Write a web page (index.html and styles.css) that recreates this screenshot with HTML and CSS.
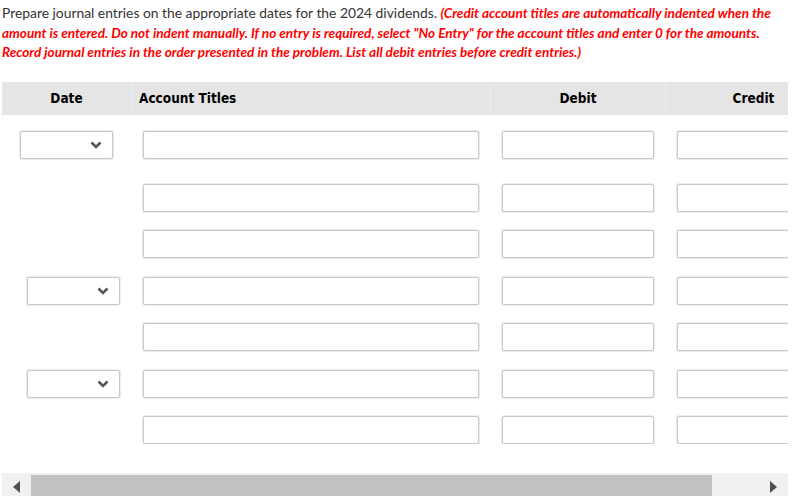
FILE: index.html
```html
<!DOCTYPE html>
<html>
<head>
<meta charset="utf-8">
<link rel="stylesheet" href="styles.css">
</head>
<body>
<div class="page">
  <p class="intro">Prepare journal entries on the appropriate dates for the 2024 dividends. <em class="warn">(Credit account titles are automatically indented when the amount is entered. Do not indent manually. If no entry is required, select "No Entry" for the account titles and enter 0 for the amounts. Record journal entries in the order presented in the problem. List all debit entries before credit entries.)</em></p>

  <div class="viewport">
    <div class="table">
      <div class="head">
        <div class="hcell c-date">Date</div>
        <div class="hcell c-acct">Account Titles</div>
        <div class="hcell c-num">Debit</div>
        <div class="hcell c-num">Credit</div>
      </div>

      <div class="row first">
        <div class="cell c-date"><div class="select"><svg class="chev" width="12" height="8" viewBox="0 0 12 8"><polyline points="1.5,1.5 6,6 10.5,1.5" fill="none" stroke="#555" stroke-width="2.6"/></svg></div></div>
        <div class="cell c-acct"><div class="input"></div></div>
        <div class="cell c-num"><div class="input"></div></div>
        <div class="cell c-num"><div class="input"></div></div>
      </div>

      <div class="row second">
        <div class="cell c-date"></div>
        <div class="cell c-acct"><div class="input"></div></div>
        <div class="cell c-num"><div class="input"></div></div>
        <div class="cell c-num"><div class="input"></div></div>
      </div>

      <div class="row">
        <div class="cell c-date"></div>
        <div class="cell c-acct"><div class="input"></div></div>
        <div class="cell c-num"><div class="input"></div></div>
        <div class="cell c-num"><div class="input"></div></div>
      </div>

      <div class="row">
        <div class="cell c-date shifted"><div class="select"><svg class="chev" width="12" height="8" viewBox="0 0 12 8"><polyline points="1.5,1.5 6,6 10.5,1.5" fill="none" stroke="#555" stroke-width="2.6"/></svg></div></div>
        <div class="cell c-acct"><div class="input"></div></div>
        <div class="cell c-num"><div class="input"></div></div>
        <div class="cell c-num"><div class="input"></div></div>
      </div>

      <div class="row">
        <div class="cell c-date"></div>
        <div class="cell c-acct"><div class="input"></div></div>
        <div class="cell c-num"><div class="input"></div></div>
        <div class="cell c-num"><div class="input"></div></div>
      </div>

      <div class="row">
        <div class="cell c-date shifted"><div class="select"><svg class="chev" width="12" height="8" viewBox="0 0 12 8"><polyline points="1.5,1.5 6,6 10.5,1.5" fill="none" stroke="#555" stroke-width="2.6"/></svg></div></div>
        <div class="cell c-acct"><div class="input"></div></div>
        <div class="cell c-num"><div class="input"></div></div>
        <div class="cell c-num"><div class="input"></div></div>
      </div>

      <div class="row">
        <div class="cell c-date"></div>
        <div class="cell c-acct"><div class="input"></div></div>
        <div class="cell c-num"><div class="input"></div></div>
        <div class="cell c-num"><div class="input"></div></div>
      </div>
    </div>
  </div>

  <div class="hscroll">
    <div class="sbtn"><span class="tri-left"></span></div>
    <div class="thumb"></div>
    <div class="sfill"></div>
    <div class="sbtn"><span class="tri-right"></span></div>
  </div>
</div>
</body>
</html>
```

FILE: styles.css
```css
html, body {
  margin: 0;
  padding: 0;
  background: #fff;
  overflow: hidden;
}

.page {
  padding: 3px 0 0 2px;
  width: 786px;
  font-family: Lato, "Liberation Sans", sans-serif;
}

.intro {
  margin: 0;
  font-size: 13.85px;
  line-height: 19.5px;
  color: #333;
}

.warn {
  color: #f00;
  font-weight: bold;
  font-style: italic;
  font-size: 13.55px;
  line-height: 1;
}

.viewport {
  margin-top: 20px;
  width: 786px;
  overflow: hidden;
}

.table {
  width: 839px;
}

.head,
.row {
  display: grid;
  grid-template-columns: 129px 359px 175px 176px;
}

.head {
  background: #e5e5e5;
  height: 33px;
  font-family: "DejaVu Sans Condensed", "DejaVu Sans", sans-serif;
  font-weight: bold;
  font-size: 13.5px;
  color: #000;
}

.hcell {
  display: flex;
  align-items: center;
  justify-content: center;
  border-left: 1px solid #ececec;
}

.hcell:first-child {
  border-left: none;
}

.hcell.c-acct {
  justify-content: flex-start;
  padding-left: 7px;
}

.row {
  grid-template-rows: 28px;
  padding-top: 18.5px;
}

.row.first {
  padding-top: 16px;
}

.row.second {
  padding-top: 25px;
}

.cell {
  display: flex;
}

.cell.c-date {
  padding-left: 18px;
}

.cell.c-date.shifted {
  padding-left: 25px;
}

.cell.c-acct {
  padding-left: 12px;
  padding-right: 11px;
}

.cell.c-num {
  padding-left: 12px;
  padding-right: 11px;
}

.input,
.select {
  box-sizing: border-box;
  height: 28px;
  border: 1px solid #c9c9c9;
  border-radius: 2px;
  box-shadow: 0 0 0 1px #ececec;
  background: #fff;
}

.input {
  flex: 1;
}

.select {
  width: 93px;
  display: flex;
  align-items: center;
  justify-content: flex-end;
  padding-right: 10px;
}

.chev {
  display: block;
}

.hscroll {
  margin-top: 29px;
  width: 786px;
  height: 27px;
  background: #f1f1f1;
  display: flex;
}

.sbtn {
  width: 29px;
  display: flex;
  align-items: center;
  justify-content: center;
}

.thumb {
  width: 681px;
  margin-top: 2px;
  background: #c1c1c1;
}

.sfill {
  flex: 1;
}

.tri-left {
  width: 0;
  height: 0;
  border-top: 6.5px solid transparent;
  border-bottom: 6.5px solid transparent;
  border-right: 7px solid #505050;
}

.tri-right {
  width: 0;
  height: 0;
  border-top: 6.5px solid transparent;
  border-bottom: 6.5px solid transparent;
  border-left: 7px solid #505050;
}
```
